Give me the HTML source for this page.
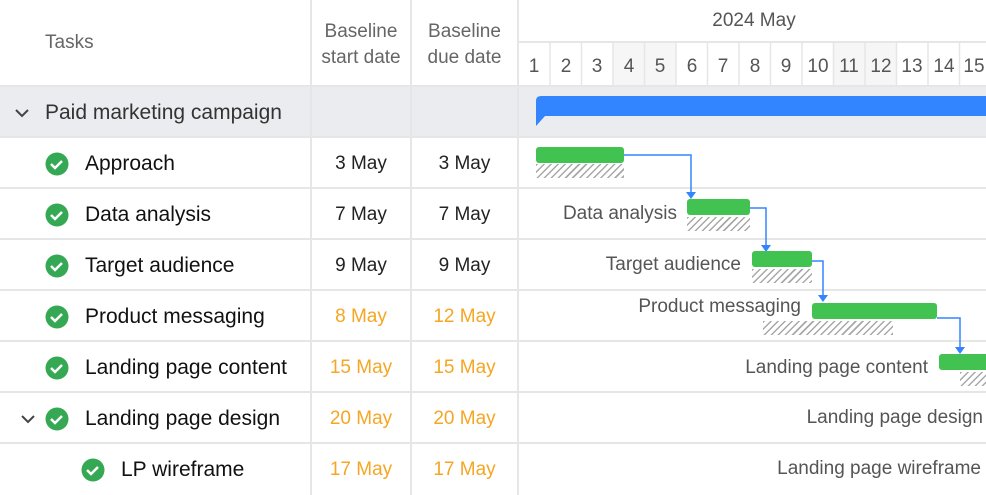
<!DOCTYPE html><html><head><style>
body{margin:0;width:986px;height:495px;overflow:hidden;background:#fff;font-family:"Liberation Sans",sans-serif;position:relative}
.a{position:absolute}
.hl{position:absolute;left:0;width:986px;height:2px;background:#e6e6e6}
.vl{position:absolute;top:0;height:495px;width:2px;background:#e6e6e6}
.t{position:absolute;font-size:21px;color:#111;white-space:nowrap}
.d{position:absolute;font-size:19px;text-align:center;white-space:nowrap}
.lb{position:absolute;font-size:19px;color:#555;white-space:nowrap;text-align:right}
.g{position:absolute;background:#42c250;border-radius:3px;height:16px}
.h{position:absolute;height:14px;background:repeating-linear-gradient(135deg,#a8a8a8 0 1.5px,transparent 1.5px 5px)}
</style></head><body>
<div class="a" style="left:0;top:86px;width:986px;height:51px;background:#ebecef"></div>
<div class="a" style="left:613px;top:42px;width:63px;height:44px;background:#f6f6f6"></div>
<div class="a" style="left:833px;top:42px;width:63px;height:44px;background:#f6f6f6"></div>
<div class="hl" style="top:85px"></div>
<div class="hl" style="top:136px"></div>
<div class="hl" style="top:187px"></div>
<div class="hl" style="top:238px"></div>
<div class="hl" style="top:289px"></div>
<div class="hl" style="top:340px"></div>
<div class="hl" style="top:391px"></div>
<div class="hl" style="top:442px"></div>
<div class="a" style="left:518px;top:41px;width:468px;height:2px;background:#e6e6e6"></div>
<div class="vl" style="left:310px"></div><div class="vl" style="left:410px"></div><div class="vl" style="left:517px"></div>
<svg class="a" style="left:0;top:0" width="986" height="495">
<g stroke="#e6e6e6" stroke-width="1.5">
<line x1="550" y1="42" x2="550" y2="86"/><line x1="581.5" y1="42" x2="581.5" y2="86"/><line x1="613" y1="42" x2="613" y2="86"/><line x1="644.5" y1="42" x2="644.5" y2="86"/><line x1="676" y1="42" x2="676" y2="86"/><line x1="707.5" y1="42" x2="707.5" y2="86"/><line x1="739" y1="42" x2="739" y2="86"/><line x1="770.5" y1="42" x2="770.5" y2="86"/><line x1="802" y1="42" x2="802" y2="86"/><line x1="833.5" y1="42" x2="833.5" y2="86"/><line x1="865" y1="42" x2="865" y2="86"/><line x1="896.5" y1="42" x2="896.5" y2="86"/><line x1="928" y1="42" x2="928" y2="86"/><line x1="959.5" y1="42" x2="959.5" y2="86"/>
</g>
<g font-family="Liberation Sans" font-size="19" fill="#555" text-anchor="middle">
<text x="534" y="72">1</text><text x="566" y="72">2</text><text x="597" y="72">3</text><text x="629" y="72">4</text><text x="660" y="72">5</text><text x="692" y="72">6</text><text x="723" y="72">7</text><text x="755" y="72">8</text><text x="786" y="72">9</text><text x="818" y="72">10</text><text x="849" y="72">11</text><text x="881" y="72">12</text><text x="912" y="72">13</text><text x="944" y="72">14</text><text x="974" y="72">15</text>
</g>
<path d="M536 101 Q536 96 541 96 L986 96 L986 116 L545 116 L536 126 Z" fill="#3385ff"/>
<g stroke="#3385ff" stroke-width="1.5" fill="none">
<path d="M624 155 H691 V193"/><path d="M750 208 H766 V245"/><path d="M812 261 H823 V296"/><path d="M937 318 H960 V348"/>
</g>
<g fill="#3385ff">
<path d="M686 192 h10 l-5 7z"/><path d="M761 245 h10 l-5 7z"/><path d="M818 295 h10 l-5 7z"/><path d="M955 347 h10 l-5 7z"/>
</g>
<g fill="none" stroke="#444" stroke-width="2"><path d="M16 110 l6 6 l6 -6"/><path d="M22 416 l6 6 l6 -6"/></g>
<g><circle cx="57" cy="164" r="11.5" fill="#34a853"/><circle cx="57" cy="215" r="11.5" fill="#34a853"/><circle cx="57" cy="266" r="11.5" fill="#34a853"/><circle cx="57" cy="317" r="11.5" fill="#34a853"/><circle cx="57" cy="368" r="11.5" fill="#34a853"/><circle cx="57" cy="419" r="11.5" fill="#34a853"/><circle cx="93" cy="470" r="11.5" fill="#34a853"/></g>
<g fill="none" stroke="#fff" stroke-width="2.5"><path d="M51 164 l4 4 l7 -7"/><path d="M51 215 l4 4 l7 -7"/><path d="M51 266 l4 4 l7 -7"/><path d="M51 317 l4 4 l7 -7"/><path d="M51 368 l4 4 l7 -7"/><path d="M51 419 l4 4 l7 -7"/><path d="M87 470 l4 4 l7 -7"/></g>
</svg>
<div class="t" style="left:45px;top:32px;font-size:19px;color:#666">Tasks</div>
<div class="d" style="left:311px;top:19px;width:100px;color:#666;line-height:26px">Baseline<br>start date</div>
<div class="d" style="left:411px;top:19px;width:107px;color:#666;line-height:26px">Baseline<br>due date</div>
<div class="d" style="left:518px;top:10px;width:472px;color:#555">2024 May</div>
<div class="t" style="left:45px;top:101px;color:#333">Paid marketing campaign</div>
<div class="t" style="left:85px;top:152px">Approach</div>
<div class="t" style="left:85px;top:203px">Data analysis</div>
<div class="t" style="left:85px;top:254px">Target audience</div>
<div class="t" style="left:85px;top:305px">Product messaging</div>
<div class="t" style="left:85px;top:356px">Landing page content</div>
<div class="t" style="left:85px;top:407px">Landing page design</div>
<div class="t" style="left:121px;top:458px">LP wireframe</div>
<div class="d" style="left:311px;width:100px;top:153px;color:#222">3 May</div><div class="d" style="left:411px;width:107px;top:153px;color:#222">3 May</div>
<div class="d" style="left:311px;width:100px;top:204px;color:#222">7 May</div><div class="d" style="left:411px;width:107px;top:204px;color:#222">7 May</div>
<div class="d" style="left:311px;width:100px;top:255px;color:#222">9 May</div><div class="d" style="left:411px;width:107px;top:255px;color:#222">9 May</div>
<div class="d" style="left:311px;width:100px;top:306px;color:#f5a623">8 May</div><div class="d" style="left:411px;width:107px;top:306px;color:#f5a623">12 May</div>
<div class="d" style="left:311px;width:100px;top:357px;color:#f5a623">15 May</div><div class="d" style="left:411px;width:107px;top:357px;color:#f5a623">15 May</div>
<div class="d" style="left:311px;width:100px;top:408px;color:#f5a623">20 May</div><div class="d" style="left:411px;width:107px;top:408px;color:#f5a623">20 May</div>
<div class="d" style="left:311px;width:100px;top:459px;color:#f5a623">17 May</div><div class="d" style="left:411px;width:107px;top:459px;color:#f5a623">17 May</div>
<div class="g" style="left:536px;top:147px;width:88px"></div><div class="h" style="left:536px;top:164px;width:88px"></div>
<div class="g" style="left:687px;top:199px;width:63px"></div><div class="h" style="left:687px;top:217px;width:63px"></div>
<div class="g" style="left:752px;top:251px;width:60px"></div><div class="h" style="left:752px;top:269px;width:60px"></div>
<div class="g" style="left:812px;top:303px;width:125px"></div><div class="h" style="left:763px;top:321px;width:130px"></div>
<div class="g" style="left:939px;top:354px;width:50px"></div><div class="h" style="left:960px;top:372px;width:26px"></div>
<div class="lb" style="right:309px;top:203px">Data analysis</div>
<div class="lb" style="right:245px;top:254px">Target audience</div>
<div class="lb" style="right:185px;top:296px">Product messaging</div>
<div class="lb" style="right:58px;top:357px">Landing page content</div>
<div class="lb" style="right:3px;top:407px">Landing page design</div>
<div class="lb" style="right:5px;top:458px">Landing page wireframe</div>
</body></html>
